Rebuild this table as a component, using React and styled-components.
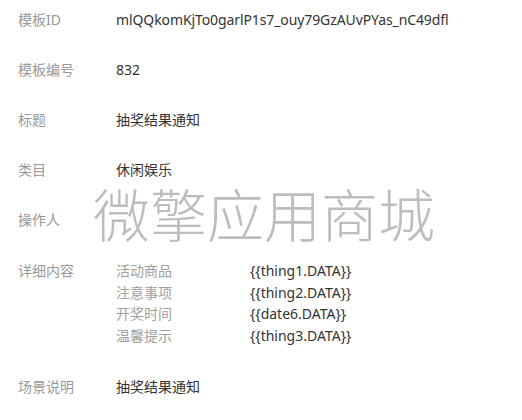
import React from "react";
import styled, { createGlobalStyle } from "styled-components";

const Global = createGlobalStyle`
  html, body { margin: 0; padding: 0; background: #fff; }
  body { font-family: "Noto Sans", "Noto Sans CJK SC", sans-serif; font-size: 14px; }
`;

const Page = styled.div`
  position: relative;
  width: 522px;
  height: 420px;
  overflow: hidden;
  padding: 10px 0 0 18px;
  box-sizing: border-box;
  display: flex;
  flex-direction: column;
  gap: 30px;
`;

const Row = styled.div`
  display: flex;
  align-items: flex-start;
  line-height: 20px;
`;

const Label = styled.div`
  width: 98px;
  flex: none;
  color: #999;
  line-height: ${(p) => p.$lh || "20px"};
`;

const Value = styled.div`
  color: #333;
  white-space: nowrap;
  letter-spacing: ${(p) => p.$ls || "normal"};
`;

const Detail = styled.div`
  display: grid;
  grid-template-columns: 134px auto;
  line-height: 21.7px;
`;

const SubLabel = styled.div`
  color: #a0a0a0;
`;

const SubValue = styled.div`
  color: #333;
`;

const Watermark = styled.div`
  position: absolute;
  left: 93px;
  top: 183px;
  font-family: "Noto Sans CJK SC", sans-serif;
  font-size: 57px;
  font-weight: 300;
  line-height: 58px;
  color: #bdbdbd;
  white-space: nowrap;
  pointer-events: none;
`;

const details = [
  ["活动商品", "{{thing1.DATA}}"],
  ["注意事项", "{{thing2.DATA}}"],
  ["开奖时间", "{{date6.DATA}}"],
  ["温馨提示", "{{thing3.DATA}}"],
];

export default function App() {
  return (
    <>
      <Global />
      <Page>
        <Row>
          <Label>模板ID</Label>
          <Value $ls="-0.1px">mlQQkomKjTo0garlP1s7_ouy79GzAUvPYas_nC49dfl</Value>
        </Row>
        <Row>
          <Label>模板编号</Label>
          <Value>832</Value>
        </Row>
        <Row>
          <Label>标题</Label>
          <Value>抽奖结果通知</Value>
        </Row>
        <Row>
          <Label>类目</Label>
          <Value>休闲娱乐</Value>
        </Row>
        <Row>
          <Label>操作人</Label>
          <Value></Value>
        </Row>
        <Row>
          <Label $lh="21.7px">详细内容</Label>
          <Detail>
            {details.map(([k, v]) => (
              <React.Fragment key={k}>
                <SubLabel>{k}</SubLabel>
                <SubValue>{v}</SubValue>
              </React.Fragment>
            ))}
          </Detail>
        </Row>
        <Row>
          <Label>场景说明</Label>
          <Value>抽奖结果通知</Value>
        </Row>
        <Watermark>微擎应用商城</Watermark>
      </Page>
    </>
  );
}
